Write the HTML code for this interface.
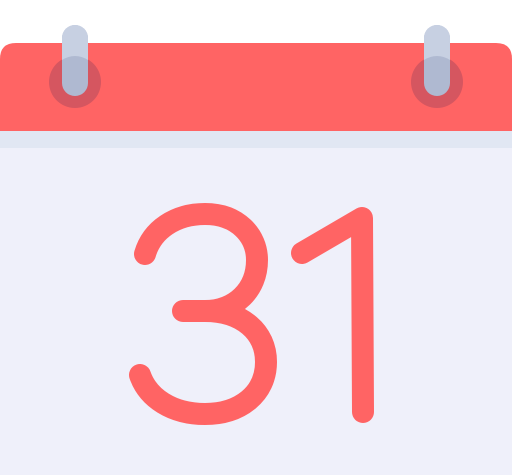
<!DOCTYPE html>
<html><head><style>html,body{margin:0;padding:0;background:#fff}svg{display:block}</style></head>
<body>
<svg width="512" height="475" viewBox="0 0 512 475" xmlns="http://www.w3.org/2000/svg">
<path d="M0,475 L0,59 Q0,43 16,43 L496,43 Q512,43 512,59 L512,475 Z" fill="#ff6464"/>
<rect x="0" y="131" width="512" height="344" fill="#eff0fa"/>
<rect x="0" y="131" width="512" height="17" fill="#e1e7f3"/>
<circle cx="75" cy="82" r="26" fill="#d55660"/>
<circle cx="437" cy="82" r="26" fill="#d55660"/>
<rect x="62" y="25" width="26" height="71" rx="13" fill="#afb9d1"/>
<path d="M62,60 L62,38 A13,13 0 0 1 88,38 L88,60 Q75,52 62,60 Z" fill="#c7d0e2"/>
<rect x="424" y="25" width="26" height="71" rx="13" fill="#afb9d1"/>
<path d="M424,60 L424,38 A13,13 0 0 1 450,38 L450,60 Q437,52 424,60 Z" fill="#c7d0e2"/>
<g fill="none" stroke="#ff6464" stroke-width="22" stroke-linecap="round" stroke-linejoin="round">
<path d="M145,254 C152,230 175,214 205,214 C238,214 257,236 257,260 C257,290 235,311 205,311 L183,311 M205,311 C242,311 266,332 266,362 C266,394 240,414 205,414 C172,414 148,398 140,375"/>
<path d="M302,253 L362,218 L363,412"/>
</g>
</svg>
</body></html>
